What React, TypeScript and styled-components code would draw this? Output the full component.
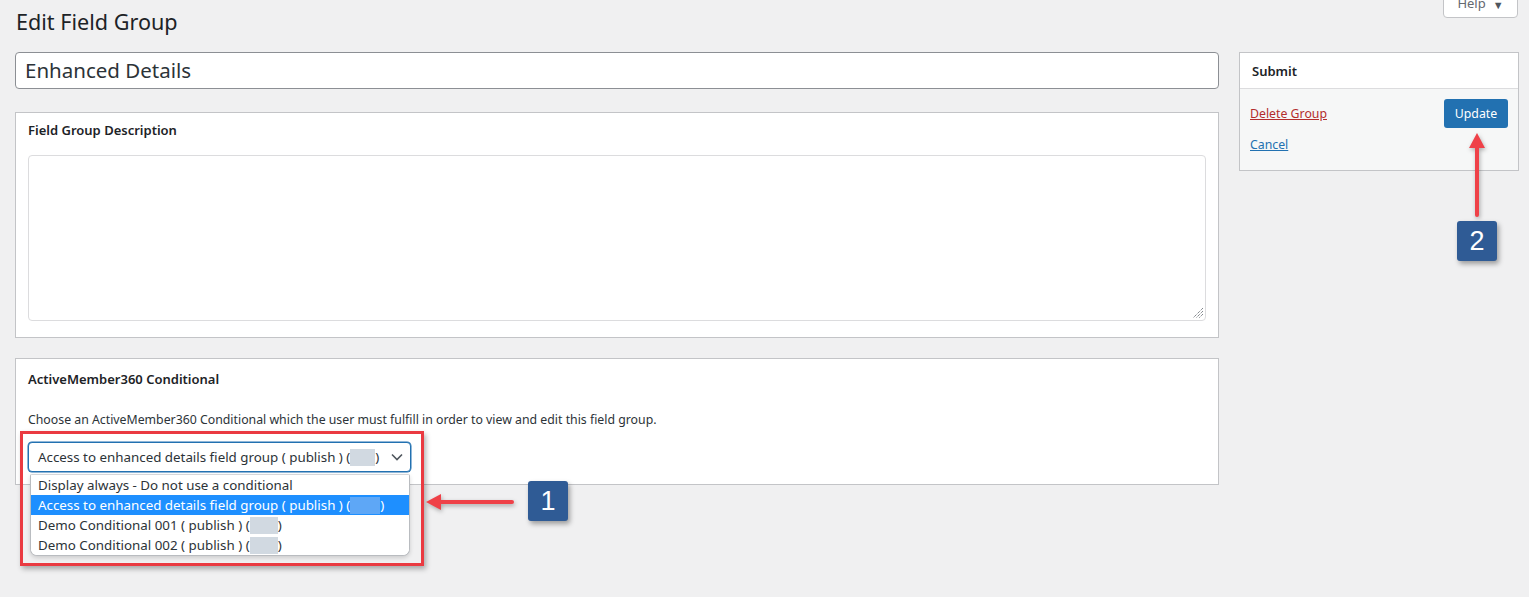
import React from "react";
import styled, { createGlobalStyle } from "styled-components";

const FONT = `"Noto Sans", "Open Sans", sans-serif`;

const Global = createGlobalStyle`
  html, body { margin: 0; padding: 0; }
  body {
    background: #f0f0f1;
    font-family: ${FONT};
    color: #1d2327;
    font-size: 13px;
    overflow: hidden;
  }
  * { box-sizing: border-box; }
`;

const Page = styled.div`
  position: relative;
  width: 1529px;
  height: 597px;
  padding: 7px 10px 0 15px;
`;

const HelpTab = styled.button`
  position: absolute;
  top: -8px;
  right: 11px;
  width: 75px;
  height: 26px;
  background: #fff;
  border: 1px solid #c3c4c7;
  border-radius: 0 0 4px 4px;
  color: #646970;
  font-family: ${FONT};
  font-size: 13px;
  padding: 0 0 5px;
  display: flex;
  align-items: flex-end;
  justify-content: center;
  gap: 7px;
`;

const HelpCaret = styled.span`
  font-size: 11px;
  color: #50575e;
`;

const Heading = styled.h1`
  margin: 0 0 15px 1px;
  font-size: 21.6px;
  font-weight: 400;
  line-height: 30px;
  color: #1d2327;
`;

const Columns = styled.div`
  display: grid;
  grid-template-columns: 1204px 280px;
  column-gap: 20px;
  align-items: start;
`;

const Main = styled.div`
  display: flex;
  flex-direction: column;
`;

const TitleInput = styled.div`
  height: 37px;
  background: #fff;
  border: 1px solid #8c8f94;
  border-radius: 4px;
  padding: 0 9px;
  font-size: 20.5px;
  line-height: 35px;
  color: #2c3338;
`;

const Panel = styled.section<{ $top: number; $mt: number }>`
  margin-top: ${(p) => p.$mt}px;
  background: #fff;
  border: 1px solid #c3c4c7;
  padding: ${(p) => p.$top}px 12px 0;
`;

const PanelTitle = styled.h2`
  margin: 0;
  font-size: 13px;
  font-weight: 600;
  line-height: 19px;
  color: #1d2327;
`;

const TextArea = styled.div`
  position: relative;
  margin: 15px 0 16px;
  height: 166px;
  border: 1px solid #dcdcde;
  border-radius: 4px;
  background: #fff;
`;

const Grip = styled.svg`
  position: absolute;
  right: 1px;
  bottom: 1px;
`;

const Description = styled.p`
  margin: 22px 0 13px;
  font-size: 12.3px;
  line-height: 18px;
  color: #2c3338;
`;

const SelectWrap = styled.div`
  position: relative;
  width: 383px;
  margin-bottom: 12px;
`;

const SelectBox = styled.div`
  height: 30px;
  border: 1px solid #2271b1;
  box-shadow: 0 0 0 0.5px #2271b1;
  border-radius: 4px;
  background: #fff;
  display: flex;
  align-items: center;
  padding: 0 7px 0 9px;
  font-size: 13.35px;
  color: #2c3338;
  white-space: nowrap;
`;

const Chevron = styled.svg`
  margin-left: auto;
`;

const Redacted = styled.span<{ $sel?: boolean; $w: number }>`
  display: inline-block;
  width: ${(p) => p.$w}px;
  height: 17px;
  vertical-align: -4px;
  background: ${(p) => (p.$sel ? "#5ea7f6" : "#d1d9e1")};
`;

const Dropdown = styled.ul`
  position: absolute;
  left: 2px;
  top: 32px;
  width: 380px;
  margin: 0;
  padding: 0;
  list-style: none;
  background: #fff;
  border: 1px solid #b9bcc0;
  border-top-color: #d5d7da;
  border-radius: 2px 2px 7px 7px;
  box-shadow: 0 2px 4px rgba(0, 0, 0, 0.15);
  overflow: hidden;
  z-index: 2;
`;

const Option = styled.li<{ $sel?: boolean }>`
  height: 20px;
  line-height: 20px;
  padding-left: 7px;
  font-size: 13.35px;
  white-space: nowrap;
  color: ${(p) => (p.$sel ? "#fff" : "#2c3338")};
  background: ${(p) => (p.$sel ? "#1e8fff" : "#fff")};
`;

const Highlight = styled.div`
  position: absolute;
  left: -8px;
  top: -11px;
  width: 404px;
  height: 135px;
  border: 3px solid #ea3a41;
  box-shadow: 2px 3px 5px rgba(0, 0, 0, 0.3);
  z-index: 3;
  pointer-events: none;
`;

const Badge = styled.div<{ $left: number; $top: number }>`
  position: absolute;
  left: ${(p) => p.$left}px;
  top: ${(p) => p.$top}px;
  width: 40px;
  height: 40px;
  border-radius: 3px;
  background: #2f5b95;
  color: #fff;
  font-family: "Liberation Sans", Arial, sans-serif;
  font-size: 27px;
  line-height: 40px;
  text-align: center;
  box-shadow: 2px 3px 5px rgba(0, 0, 0, 0.35);
  z-index: 3;
`;

const Arrow = styled.svg<{ $left: number; $top: number }>`
  position: absolute;
  left: ${(p) => p.$left}px;
  top: ${(p) => p.$top}px;
  overflow: visible;
  z-index: 3;
  filter: drop-shadow(1px 2px 2px rgba(0, 0, 0, 0.3));
`;

const Side = styled.aside`
  position: relative;
`;

const SubmitBox = styled.div`
  background: #fff;
  border: 1px solid #c3c4c7;
`;

const SubmitHead = styled.h2`
  margin: 0;
  height: 36px;
  padding: 0 12px;
  font-size: 13px;
  font-weight: 600;
  line-height: 36px;
  border-bottom: 1px solid #dcdcde;
`;

const SubmitBody = styled.div`
  background: #f6f7f7;
  display: grid;
  grid-template-columns: 1fr auto;
  align-items: center;
  padding: 10px 10px 16px;
  row-gap: 7px;
`;

const LinkText = styled.a<{ $danger?: boolean }>`
  font-size: 12.3px;
  line-height: 19px;
  color: ${(p) => (p.$danger ? "#b32d2e" : "#2271b1")};
  text-decoration: underline;
  justify-self: start;
`;

const UpdateButton = styled.button`
  grid-row: 1;
  grid-column: 2;
  width: 64px;
  height: 29px;
  border: none;
  border-radius: 3px;
  background: #2271b1;
  color: #fff;
  font-family: ${FONT};
  font-size: 12.3px;
  padding: 0;
`;

export default function App() {
  return (
    <>
      <Global />
      <Page>
        <HelpTab>
          <span>Help</span>
          <HelpCaret>▼</HelpCaret>
        </HelpTab>
        <Heading>Edit Field Group</Heading>
        <Columns>
          <Main>
            <TitleInput>Enhanced Details</TitleInput>
            <Panel $top={8} $mt={23}>
              <PanelTitle>Field Group Description</PanelTitle>
              <TextArea>
                <Grip width="12" height="12" viewBox="0 0 12 12">
                  <path d="M11 4 L4 11 M11 7 L7 11 M11 1 L1 11" stroke="#50575e" strokeWidth="1" strokeDasharray="1 1" />
                </Grip>
              </TextArea>
            </Panel>
            <Panel $top={11} $mt={20}>
              <PanelTitle>ActiveMember360 Conditional</PanelTitle>
              <Description>
                Choose an ActiveMember360 Conditional which the user must fulfill in order to view and edit this field group.
              </Description>
              <SelectWrap>
                <SelectBox>
                  <span>
                    Access to enhanced details field group ( publish ) (<Redacted $w={25} />)
                  </span>
                  <Chevron width="12" height="8" viewBox="0 0 12 8">
                    <path d="M1 1.5 L6 6.5 L11 1.5" fill="none" stroke="#50575e" strokeWidth="1.6" />
                  </Chevron>
                </SelectBox>
                <Dropdown>
                  <Option>Display always - Do not use a conditional</Option>
                  <Option $sel>
                    Access to enhanced details field group ( publish ) (<Redacted $sel $w={30} />)
                  </Option>
                  <Option>
                    Demo Conditional 001 ( publish ) (<Redacted $w={28} />)
                  </Option>
                  <Option>
                    Demo Conditional 002 ( publish ) (<Redacted $w={28} />)
                  </Option>
                </Dropdown>
                <Highlight />
                <Arrow $left={398} $top={50} width="88" height="20" viewBox="0 0 88 20">
                  <path d="M86 10 L14 10" stroke="#ef4148" strokeWidth="4" strokeLinecap="round" />
                  <path d="M0 10 L15 2 L15 18 Z" fill="#ef4148" />
                </Arrow>
                <Badge $left={500} $top={39}>1</Badge>
              </SelectWrap>
            </Panel>
          </Main>
          <Side>
            <SubmitBox>
              <SubmitHead>Submit</SubmitHead>
              <SubmitBody>
                <LinkText $danger href="#">Delete Group</LinkText>
                <UpdateButton>Update</UpdateButton>
                <LinkText href="#">Cancel</LinkText>
              </SubmitBody>
            </SubmitBox>
            <Arrow $left={228} $top={81} width="20" height="84" viewBox="0 0 20 84">
              <path d="M10 82 L10 14" stroke="#ef4148" strokeWidth="4" strokeLinecap="round" />
              <path d="M10 0 L2 15 L18 15 Z" fill="#ef4148" />
            </Arrow>
            <Badge $left={218} $top={169}>2</Badge>
          </Side>
        </Columns>
      </Page>
    </>
  );
}
